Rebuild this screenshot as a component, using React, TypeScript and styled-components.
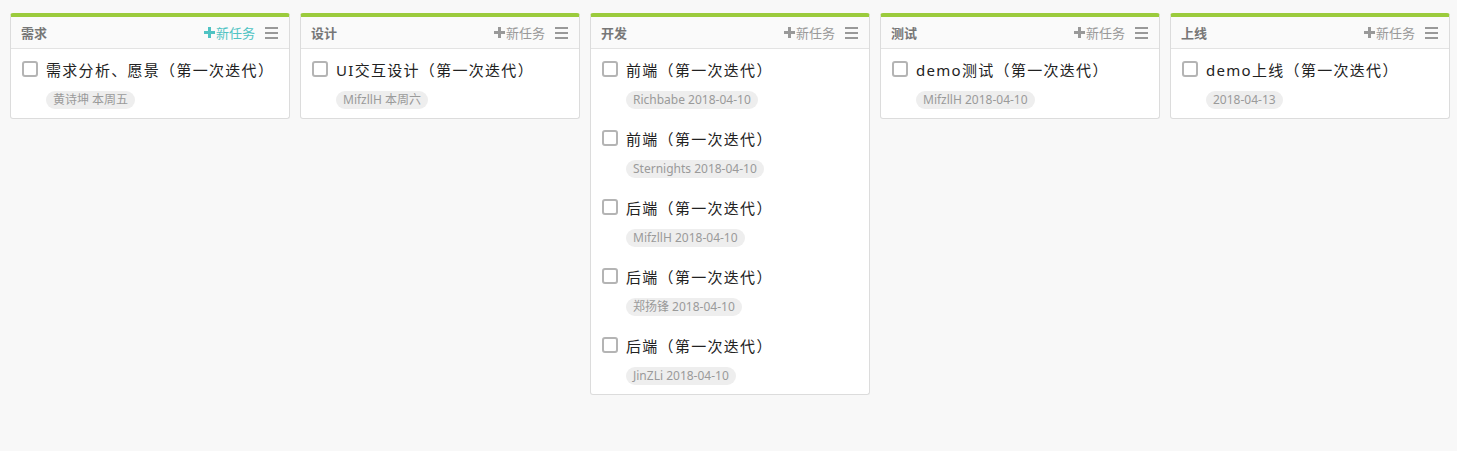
import React from "react";
import styled, { createGlobalStyle } from "styled-components";

const Global = createGlobalStyle`
  html, body { margin: 0; padding: 0; background: #f8f8f8; }
  body {
    font-family: "Noto Sans", "Noto Sans CJK SC", sans-serif;
    text-spacing-trim: space-all;
  }
`;

const Board = styled.div`
  display: flex;
  align-items: flex-start;
  gap: 10px;
  padding: 13px 0 0 10px;
`;

const Column = styled.section`
  flex: 0 0 280px;
  box-sizing: border-box;
  background: #fff;
  border: 1px solid #dcdcdc;
  border-top: 4px solid #9bcb3c;
  border-radius: 3px;
`;

const Header = styled.header`
  height: 31px;
  display: flex;
  align-items: center;
  padding: 0 11px 0 10px;
  background: #fafafa;
  border-bottom: 1px solid #e3e3e3;
`;

const Title = styled.h3`
  margin: 0 0 1px;
  flex: 1;
  font-size: 13px;
  font-weight: bold;
  color: #777;
`;

const NewTask = styled.span<{ $active?: boolean }>`
  display: flex;
  align-items: center;
  font-size: 13px;
  color: ${(p) => (p.$active ? "#4fc3c3" : "#999")};
  margin-right: 10px;
  svg { margin-right: 1px; }
`;

const Menu = styled.span`
  display: flex;
  flex-direction: column;
  gap: 3px;
  width: 13px;
  span { height: 2px; background: #999; display: block; }
`;

const Task = styled.div`
  display: grid;
  grid-template-columns: 16px 1fr;
  column-gap: 8px;
  row-gap: 10px;
  padding: 10px 11px 9px 11px;
`;

const Check = styled.span`
  width: 16px;
  height: 16px;
  box-sizing: border-box;
  border: 2px solid #b4b4b4;
  border-radius: 3px;
  margin-top: 2px;
`;

const TaskTitle = styled.div`
  font-size: 15px;
  line-height: 22px;
  color: #222;
  letter-spacing: 1.3px;
`;

const Tag = styled.span`
  grid-column: 2;
  justify-self: start;
  height: 18px;
  line-height: 18px;
  padding: 0 7px;
  border-radius: 9px;
  background: #eeeeee;
  color: #9a9a9a;
  font-size: 12px;
`;

type T = { title: string; tag: string };
const columns: { name: string; active?: boolean; tasks: T[] }[] = [
  { name: "需求", active: true, tasks: [{ title: "需求分析、愿景（第一次迭代）", tag: "黄诗坤 本周五" }] },
  { name: "设计", tasks: [{ title: "UI交互设计（第一次迭代）", tag: "MifzllH 本周六" }] },
  {
    name: "开发",
    tasks: [
      { title: "前端（第一次迭代）", tag: "Richbabe 2018-04-10" },
      { title: "前端（第一次迭代）", tag: "Sternights 2018-04-10" },
      { title: "后端（第一次迭代）", tag: "MifzllH 2018-04-10" },
      { title: "后端（第一次迭代）", tag: "郑扬锋 2018-04-10" },
      { title: "后端（第一次迭代）", tag: "JinZLi 2018-04-10" },
    ],
  },
  { name: "测试", tasks: [{ title: "demo测试（第一次迭代）", tag: "MifzllH 2018-04-10" }] },
  { name: "上线", tasks: [{ title: "demo上线（第一次迭代）", tag: "2018-04-13" }] },
];

const Plus = () => (
  <svg width="11" height="11" viewBox="0 0 11 11">
    <path d="M4 0h3v4h4v3H7v4H4V7H0V4h4z" fill="currentColor" />
  </svg>
);

export default function App() {
  return (
    <>
      <Global />
      <Board>
        {columns.map((c) => (
          <Column key={c.name}>
            <Header>
              <Title>{c.name}</Title>
              <NewTask $active={c.active}>
                <Plus />
                新任务
              </NewTask>
              <Menu>
                <span />
                <span />
                <span />
              </Menu>
            </Header>
            {c.tasks.map((t, i) => (
              <Task key={i}>
                <Check />
                <TaskTitle>{t.title}</TaskTitle>
                <Tag>{t.tag}</Tag>
              </Task>
            ))}
          </Column>
        ))}
      </Board>
    </>
  );
}
